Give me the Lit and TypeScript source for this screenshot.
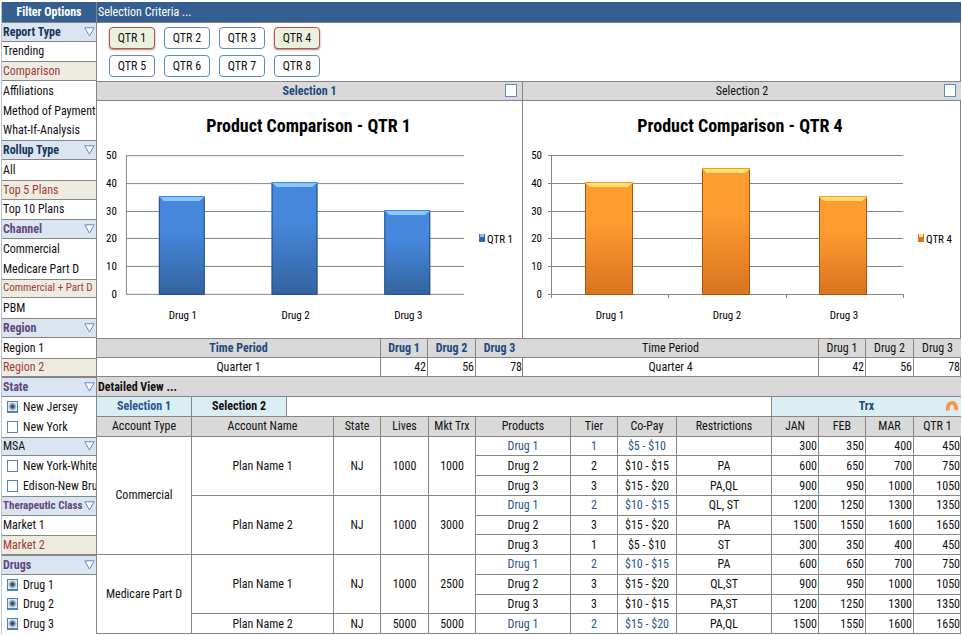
import { LitElement, html, svg, css } from "lit";
import { customElement, property, state } from "lit/decorators.js";
import { classMap } from "lit/directives/class-map.js";

type Group = { name: string; tone: string; kind: "list" | "check"; items: string[]; on: string[] };

const GROUPS: Group[] = [
  { name: "Report Type", tone: "navy", kind: "list", items: ["Trending", "Comparison", "Affiliations", "Method of Payment", "What-If-Analysis"], on: ["Comparison"] },
  { name: "Rollup Type", tone: "navy", kind: "list", items: ["All", "Top 5 Plans", "Top 10 Plans"], on: ["Top 5 Plans"] },
  { name: "Channel", tone: "purple", kind: "list", items: ["Commercial", "Medicare Part D", "Commercial + Part D", "PBM"], on: ["Commercial + Part D"] },
  { name: "Region", tone: "purple", kind: "list", items: ["Region 1", "Region 2"], on: ["Region 2"] },
  { name: "State", tone: "purple", kind: "check", items: ["New Jersey", "New York"], on: ["New Jersey"] },
  { name: "MSA", tone: "plain", kind: "check", items: ["New York-White", "Edison-New Bru"], on: [] },
  { name: "Therapeutic Class", tone: "purple", kind: "list", items: ["Market 1", "Market 2"], on: ["Market 2"] },
  { name: "Drugs", tone: "purple", kind: "check", items: ["Drug 1", "Drug 2", "Drug 3"], on: ["Drug 1", "Drug 2", "Drug 3"] },
];

@customElement("filter-sidebar")
class FilterSidebar extends LitElement {
  static styles = css`
    :host { display: grid; grid-template-rows: repeat(32, minmax(18px, 1fr)); min-width: 0; border-left: 1px solid #b8c4d4; border-right: 1px solid #868686; }
    * { box-sizing: border-box; }
    button { font: inherit; color: inherit; margin: 0; border: 0; background: none; text-align: left; cursor: pointer; }
    .title { margin: 0; font-size: inherit; font-weight: bold; color: #fff; background: #365f91; display: grid; place-items: center; }
    .head, .item, .tick { display: flex; align-items: center; padding: 0 1px; min-width: 0; overflow: hidden; white-space: nowrap; }
    .head { justify-content: space-between; background: #dbe5f1; border-top: 1px solid #868686; border-bottom: 1px solid #868686; font-weight: bold; }
    .navy { color: #17365d; }
    .purple { color: #5f497a; }
    .plain { color: #111; font-weight: normal; }
    .long { font-size: 11px; }
    .head svg { width: 11px; height: 10px; flex: none; }
    .item.on { color: #a33a38; background: #eeece1; border-top: 1px solid #868686; border-bottom: 1px solid #868686; }
    .tick { padding-left: 5px; padding-right: 0; gap: 5px; }
    .tick input { appearance: none; flex: none; width: 11px; height: 12px; margin: 0; border: 1px solid #4f81bd; background: #fff; }
    .tick input:checked { background: radial-gradient(circle, #1f497d 15%, #8098b0 38%, #eeece1 70%); border-bottom-width: 2px; }
  `;
  render() {
    return html`
      <h2 class="title">Filter Options</h2>
      ${GROUPS.map((g) => html`
        <button class="head ${g.tone}"><span class=${g.name.length > 16 ? "long" : ""}>${g.name}</span>
          <svg viewBox="0 0 11 10" aria-hidden="true"><path d="M.8 .8H10.2L5.5 9Z" fill="#fff" stroke="#5b8bc9" /></svg>
        </button>
        ${g.items.map((i) => g.kind === "list"
          ? html`<button class=${classMap({ item: true, long: i.length > 17, on: g.on.includes(i) })}>${i}</button>`
          : html`<label class="tick"><input type="checkbox" .checked=${g.on.includes(i)} />${i}</label>`)}
      `)}
    `;
  }
}

@customElement("bar-chart")
class BarChart extends LitElement {
  @property() label = "";
  @property() tone = "blue";
  @property({ attribute: false }) values: number[] = [];
  @property({ type: Number }) span = 426;
  @property({ type: Number }) start = 29;
  @property({ type: Number }) end = 368;
  @property({ type: Boolean }) ticks = false;
  static styles = css`
    :host { display: block; min-width: 0; min-height: 0; overflow: hidden; }
    svg { display: block; width: 100%; height: 100%; }
    .title { font-size: 18px; font-weight: bold; text-anchor: middle; fill: #000; }
    .small { font-size: 11px; }
    .mid { text-anchor: middle; }
    .end { text-anchor: end; }
    .axis { stroke: #868686; fill: none; }
  `;
  render() {
    const blue = this.tone === "blue";
    const c = blue
      ? { a: "#4588dc", b: "#34639f", edge: "#214f8c", hi: "#8cc8ff", top: "#3b86e0" }
      : { a: "#ff9c30", b: "#d87320", edge: "#a9540c", hi: "#ffe070", top: "#f79a28" };
    const y = (v: number) => Math.round(193 - v * 2.78);
    const step = (this.end - this.start) / 3;
    const w = blue ? 46 : 48;
    return html`<svg viewBox="0 0 ${this.span} 237" role="img" aria-label="Product Comparison - ${this.label}">
      <defs><linearGradient id="g" x2="0" y2="1"><stop offset="0" stop-color=${c.a} /><stop offset=".35" stop-color=${c.a} /><stop offset="1" stop-color=${c.b} /></linearGradient></defs>
      <text class="title" x=${blue ? 212 : 217} y="31">Product Comparison - ${this.label}</text>
      ${[0, 10, 20, 30, 40, 50].map((v) => svg`
        <path class="axis" d="M${this.start - (this.ticks ? 3 : 0)} ${y(v) + 0.5}H${this.end}" />
        <text class="small end" x=${this.start - 9} y=${y(v) + 4}>${v}</text>`)}
      <path class="axis" d="M${this.start + 0.5} ${y(50)}V193" />
      ${this.ticks ? [0, 1, 2, 3].map((i) => svg`<path class="axis" d="M${Math.round(this.start + i * step) + 0.5} 193v4" />`) : ""}
      ${this.values.map((v, i) => {
        const mid = Math.round(this.start + (i + 0.5) * step);
        const x = mid - w / 2 - 1;
        const t = y(v) - 1;
        return svg`
          <rect x=${x} y=${t} width=${w} height=${194 - t} fill="url(#g)" />
          <path d="M${x} ${t}H${x + w}L${x + w - 5} ${t + 5}H${x + 5}Z" fill=${c.hi} />
          <path d="M${x} ${t + 0.5}H${x + w}" stroke=${c.top} />
          <path d="M${x + 0.5} ${t + 2}V193.5H${x + w - 0.5}V${t + 2}" fill="none" stroke=${c.edge} />
          <text class="small mid" x=${mid} y="218">Drug ${i + 1}</text>`;
      })}
      <rect x=${blue ? 383 : 395} y="133" width="6" height="8" fill=${c.b} />
      <rect x=${blue ? 384 : 396} y="133" width="4" height="3" fill=${c.hi} />
      <text class="small" x=${blue ? 391 : 403} y="142">${this.label}</text>
    </svg>`;
  }
}

const PRODUCTS: string[][] = [
  ["Drug 1", "1", "$5 - $10", "", "300", "350", "400", "450"],
  ["Drug 2", "2", "$10 - $15", "PA", "600", "650", "700", "750"],
  ["Drug 3", "3", "$15 - $20", "PA,QL", "900", "950", "1000", "1050"],
  ["Drug 1", "2", "$10 - $15", "QL, ST", "1200", "1250", "1300", "1350"],
  ["Drug 2", "3", "$15 - $20", "PA", "1500", "1550", "1600", "1650"],
  ["Drug 3", "1", "$5 - $10", "ST", "300", "350", "400", "450"],
  ["Drug 1", "2", "$10 - $15", "PA", "600", "650", "700", "750"],
  ["Drug 2", "3", "$15 - $20", "QL,ST", "900", "950", "1000", "1050"],
  ["Drug 3", "3", "$10 - $15", "PA,ST", "1200", "1250", "1300", "1350"],
  ["Drug 1", "2", "$15 - $20", "PA,QL", "1500", "1550", "1600", "1650"],
];
const ACCOUNTS: Record<number, [string, number]> = { 0: ["Commercial", 6], 6: ["Medicare Part D", 4] };
const PLANS: Record<number, [number, string[]]> = {
  0: [3, ["Plan Name 1", "NJ", "1000", "1000"]],
  3: [3, ["Plan Name 2", "NJ", "1000", "3000"]],
  6: [3, ["Plan Name 1", "NJ", "1000", "2500"]],
  9: [1, ["Plan Name 2", "NJ", "5000", "5000"]],
};
const HEADS = ["Account Type", "Account Name", "State", "Lives", "Mkt Trx", "Products", "Tier", "Co-Pay", "Restrictions", "JAN", "FEB", "MAR", "QTR 1"];

@customElement("app-root")
class AppRoot extends LitElement {
  @state() private picked = [1, 4];

  static styles = css`
    :host { display: grid; grid-template-columns: 96px minmax(0, 1fr); grid-template-rows: minmax(0, 1fr); box-sizing: border-box; height: 100vh; min-height: 600px; padding: 2px 1px 1px; background: #fff; color: #111; font: 12px/16px "Roboto Condensed", Roboto, Lato, sans-serif; }
    * { box-sizing: border-box; }
    button { font: inherit; color: inherit; margin: 0; padding: 0; cursor: pointer; }
    main { display: grid; min-width: 0; min-height: 0; grid-template-rows: minmax(0, 1fr) minmax(0, 3fr) minmax(0, 1fr) minmax(0, 12fr) minmax(0, 2fr) minmax(0, 1fr) minmax(0, 1fr) minmax(0, 11fr); border-right: 1px solid #868686; }
    .bar { margin: 0; font-size: inherit; font-weight: normal; background: #365f91; color: #fff; padding: 0 1px; display: flex; align-items: center; }
    .quarters { display: grid; grid-template-columns: repeat(4, 46px); grid-auto-rows: 22px; gap: 6px 9px; padding: 4px 12px; border-top: 1px solid #868686; }
    .quarter { border: 1px solid #5b8bc9; border-radius: 4px; background: #fff; }
    .quarter.on { border-color: #c0504d; background: #ebf1de; box-shadow: 0 1px 2px #888; }
    .pair { display: grid; grid-template-columns: 426fr 438fr; grid-template-rows: minmax(0, 1fr); min-height: 0; }
    .pair > :first-child { border-right: 1px solid #868686; }
    .caption { display: grid; grid-template-columns: 12px 1fr 12px; align-items: center; text-align: center; padding: 0 5px; background: #d9d9d9; border-top: 1px solid #868686; border-bottom: 1px solid #868686; }
    .caption label { grid-column: 2; }
    .caption input { appearance: none; margin: 0; width: 12px; height: 13px; border: 1px solid #5b8bc9; background: #fff; }
    .caption.first, .first th { color: #1f497d; font-weight: bold; }
    table { width: 100%; height: 100%; table-layout: fixed; border-spacing: 0; }
    th, td { padding: 0 2px; text-align: center; white-space: nowrap; border-right: 1px solid #868686; border-bottom: 1px solid #868686; }
    tr > .last { border-right: 0; }
    th { background: #d9d9d9; font-weight: normal; }
    td.num { text-align: right; padding: 0 1px; }
    .summary { border-top: 1px solid #868686; min-width: 0; }
    .blue { color: #2a5590; }
    .w47 { width: 47px; } .w48 { width: 48px; } .w59 { width: 59px; } .w95 { width: 95px; }
    .w142 { width: 142px; } .w284 { width: 284px; } .w296 { width: 296px; }
    .detail { margin: 0; font-size: inherit; font-weight: bold; background: #d9d9d9; padding: 0 1px; display: flex; align-items: center; border-bottom: 1px solid #868686; }
    .tabs { display: grid; grid-template-columns: 95fr 95fr 484fr 190fr; border-bottom: 1px solid #868686; }
    .tab { border: 0; border-right: 1px solid #868686; background: #daeef3; font-weight: bold; }
    .trx { grid-column: 4; display: grid; grid-template-columns: 14px 1fr 14px; align-items: center; text-align: center; padding: 0 2px; background: #daeef3; border: 0; border-left: 1px solid #868686; color: #1f497d; font-weight: bold; }
    .trx span { grid-column: 2; }
    .trx svg { width: 14px; height: 12px; }
    .grid { min-height: 0; }
    .grid thead th { height: 20px; }
  `;

  private toggle(n: number) {
    this.picked = this.picked.includes(n) ? this.picked.filter((q) => q !== n) : [...this.picked, n];
  }

  private summary(n: number, wide: string, first: boolean) {
    return html`<div class=${classMap({ summary: true, first })}><table>
      <colgroup><col class=${wide} /><col class="w47" /><col class="w48" /><col class="w47" /></colgroup>
      <tr><th>Time Period</th><th>Drug 1</th><th>Drug 2</th><th class="last">Drug 3</th></tr>
      <tr><td>Quarter ${n}</td><td class="num">42</td><td class="num">56</td><td class="num last">78</td></tr>
    </table></div>`;
  }

  render() {
    return html`
      <filter-sidebar></filter-sidebar>
      <main>
        <h1 class="bar">Selection Criteria ...</h1>
        <div class="quarters">
          ${[1, 2, 3, 4, 5, 6, 7, 8].map((n) => html`<button class=${classMap({ quarter: true, on: this.picked.includes(n) })} @click=${() => this.toggle(n)}>QTR ${n}</button>`)}
        </div>
        <div class="pair">
          <div class="caption first"><label for="s1">Selection 1</label><input id="s1" type="checkbox" /></div>
          <div class="caption"><label for="s2">Selection 2</label><input id="s2" type="checkbox" /></div>
        </div>
        <div class="pair">
          <bar-chart label="QTR 1" .values=${[35, 40, 30]}></bar-chart>
          <bar-chart label="QTR 4" tone="orange" .values=${[40, 45, 35]} span="438" start="28" end="380" ticks></bar-chart>
        </div>
        <div class="pair">${this.summary(1, "w284", true)}${this.summary(4, "w296", false)}</div>
        <h2 class="detail">Detailed View ...</h2>
        <div class="tabs">
          <button class="tab blue">Selection 1</button>
          <button class="tab">Selection 2</button>
          <button class="trx"><span>Trx</span>
            <svg viewBox="0 0 14 12" aria-hidden="true"><path d="M3 10.5C1.8 5.4 4.2 3 7 3C9.6 3 11 5.4 11 9" fill="none" stroke="#f79646" stroke-width="4" /><path d="M8 8L13.6 8.4L11.6 11Z" fill="#f79646" /></svg>
          </button>
        </div>
        <div class="grid"><table>
          <colgroup>${["w95", "w142", "w47", "w48", "w47", "w95", "w47", "w59", "w95", "w47", "w47", "w48", "w47"].map((w) => html`<col class=${w} />`)}</colgroup>
          <thead><tr>${HEADS.map((h, i) => html`<th class=${i === 12 ? "last" : ""}>${h}</th>`)}</tr></thead>
          <tbody>${PRODUCTS.map((row, r) => html`<tr>
            ${ACCOUNTS[r] ? html`<td rowspan=${ACCOUNTS[r][1]}>${ACCOUNTS[r][0]}</td>` : ""}
            ${PLANS[r] ? PLANS[r][1].map((t) => html`<td rowspan=${PLANS[r][0]}>${t}</td>`) : ""}
            ${row.map((t, i) => html`<td class=${classMap({ num: i > 3, last: i === 7, blue: row[0] === "Drug 1" && i < 3 })}>${t}</td>`)}
          </tr>`)}</tbody>
        </table></div>
      </main>
    `;
  }
}
